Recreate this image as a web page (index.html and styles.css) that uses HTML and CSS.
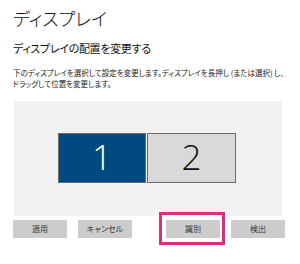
FILE: index.html
```html
<!DOCTYPE html>
<html lang="ja">
<head>
<meta charset="utf-8">
<link rel="stylesheet" href="styles.css">
</head>
<body>
<div class="page">
  <h1 class="title">ディスプレイ</h1>
  <h2 class="subtitle">ディスプレイの配置を変更する</h2>
  <p class="desc">下のディスプレイを選択して設定を変更します。ディスプレイを長押し (または選択) し、<br>ドラッグして位置を変更します。</p>
  <div class="canvas">
    <div class="monitors">
      <div class="monitor active">1</div>
      <div class="monitor">2</div>
    </div>
  </div>
  <div class="buttons">
    <div class="btn">適用</div>
    <div class="btn">キャンセル</div>
    <div class="btn spaced highlighted">識別</div>
    <div class="btn">検出</div>
  </div>
</div>
</body>
</html>
```

FILE: styles.css
```css
html, body {
  margin: 0;
  padding: 0;
  background: #ffffff;
}
body {
  width: 300px;
  height: 264px;
  overflow: hidden;
  font-family: "Noto Sans CJK JP", "Noto Sans", sans-serif;
  color: #000;
  font-feature-settings: "palt";
}
.page {
  padding: 6px 0 0 13px;
}
.title {
  margin: 0;
  font-size: 18px;
  font-weight: 300;
  line-height: 24px;
  color: #111;
}
.subtitle {
  margin: 10px 0 0 0;
  font-size: 11px;
  font-weight: 400;
  line-height: 16px;
  color: #111;
  letter-spacing: -0.3px;
}
.desc {
  margin: 11px 0 0 0;
  font-size: 7.5px;
  line-height: 11px;
  color: #222;
  white-space: nowrap;
}
.canvas {
  margin: 12px 0 0 1px;
  width: 268px;
  height: 115px;
  background: #f2f2f2;
  display: flex;
  align-items: flex-start;
  padding-top: 32px;
  box-sizing: border-box;
}
.monitors {
  display: flex;
  margin-left: 44px;
  gap: 1px;
}
.monitor {
  width: 89px;
  height: 50px;
  box-sizing: border-box;
  border: 1px solid #6b6b6b;
  background: #d9d9d9;
  color: #111;
  font-family: "Open Sans", "Noto Sans", sans-serif;
  font-weight: 300;
  font-size: 35px;
  line-height: 46px;
  text-align: center;
}
.monitor.active {
  width: 88px;
  background: #004a80;
  color: #ffffff;
}
.buttons {
  display: flex;
  margin-top: 4px;
  gap: 11px;
}
.btn {
  width: 54px;
  height: 18px;
  background: #cccccc;
  color: #333;
  font-size: 8px;
  line-height: 18px;
  text-align: center;
}
.btn.spaced {
  margin-left: 23px;
}
.highlighted {
  position: relative;
}
.highlighted::after {
  content: "";
  position: absolute;
  left: -7px;
  top: -8px;
  width: 66px;
  height: 33px;
  border: 3px solid #d6317a;
  box-sizing: border-box;
}
```
